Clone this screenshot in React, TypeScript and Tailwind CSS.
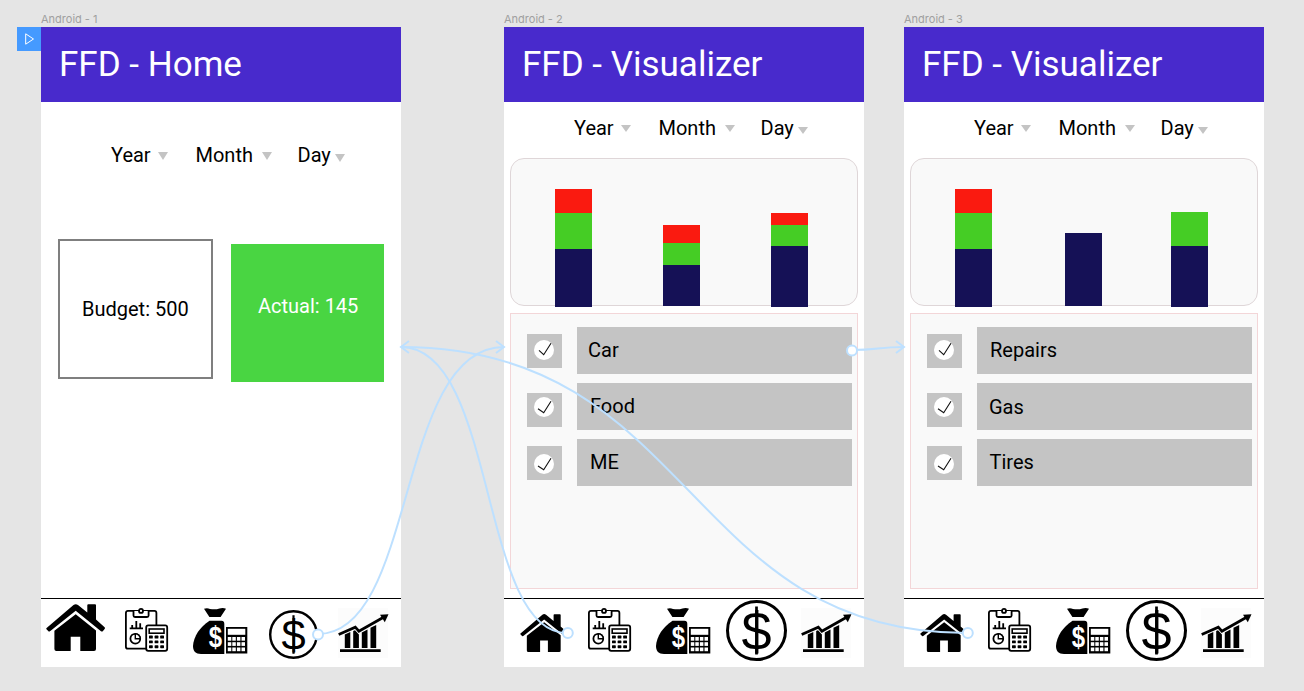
import React from "react";

type Segment = { color: string; height: string };
type Bar = { className: string; segments: Segment[] };
type Row = {
  label: string;
  gap: string;
  textClass: string;
  boxClass: string;
  check: string;
};

const RED = "bg-[#fa1a10]";
const GREEN = "bg-[#45cd25]";
const NAVY = "bg-[#151156]";

function HomeIcon({ className }: { className: string }) {
  return (
    <svg viewBox="0 0 59 47" preserveAspectRatio="none" className={className}>
      <path d="M0.6 24 27.5 1Q29.7-.7 32 1L41.3 8.6V1.2Q41.3.2 42.3.2H49Q50 .2 50 1.2V15.6L58.6 23.2Q59.4 24 58.6 25L57 27Q56 28 55 27.2L29.7 6.8 4 27.2Q3 28 2.2 27L.5 25.2Q0 24.6.6 24Z" />
      <path d="M29.7 10.2 50 26.4V45Q50 47 48 47H34.3V32.8H24.7V47H10.4Q8.4 47 8.4 45V26.8Z" />
    </svg>
  );
}

function ReportIcon() {
  return (
    <svg viewBox="0 0 44 44" className="mt-[9px] h-[44px] w-[44px] shrink-0" fill="none" stroke="#000" strokeWidth="1.8">
      <rect x="0.9" y="2.9" width="30.5" height="37.8" rx="2" />
      <path d="M8.5 3V7.5Q8.5 9 10 9H22Q23.6 9 23.6 7.5V3" fill="#fff" />
      <circle cx="16" cy="2.9" r="2" fill="#fff" />
      <path d="M4.7 20.3H18M7.2 20V17M11.3 20V13M15.2 20V15.3" />
      <circle cx="10.3" cy="30.7" r="4.9" />
      <path d="M10.3 25.8V30.7H15.2A4.9 4.9 0 0 0 10.3 25.8Z" fill="#fff" strokeWidth="1.4" />
      <rect x="21.2" y="17.4" width="21" height="25.4" rx="2" fill="#fff" />
      <rect x="24.2" y="21" width="14.8" height="4.2" strokeWidth="1.6" />
      {[29, 33.8, 38.7].map((y) =>
        [25.9, 31.5, 37.1].map((x) => (
          <rect key={`${x}-${y}`} x={x - 1.9} y={y - 1.4} width="3.8" height="2.9" rx="0.6" fill="#000" stroke="none" />
        ))
      )}
    </svg>
  );
}

function MoneyBagIcon() {
  return (
    <svg viewBox="0 0 55 47" className="ml-[24px] mt-[9px] h-[47px] w-[55px] shrink-0">
      <path d="M11 .8Q14-.4 17 .9 22 2 26.5.5 30-.6 33 .8L27.6 9H16.4Z" />
      <path d="M16.5 12.8H28.4Q31.3 12.8 31.3 16V46H8C2.5 46 0 43 0 38 .5 28.5 7 19 16.5 12.8Z" />
      <g transform="translate(22.3 39.3) scale(.8 1)">
        <text x="0" y="0" textAnchor="middle" fontSize="30" fontWeight="700" fill="#fff" fontFamily="Liberation Sans, sans-serif">
          $
        </text>
      </g>
      <rect x="33" y="19" width="21.3" height="26.500" />
      <rect x="34.8" y="20.8" width="17.5" height="6" fill="#fff" />
      {[29, 34.2, 39.5].map((y) =>
        [34.8, 39.3, 43.9, 48.5].map((x) => <rect key={`${x}-${y}`} x={x} y={y} width="3.5" height="3.7" fill="#fff" />)
      )}
    </svg>
  );
}

function DollarIcon({ className }: { className: string }) {
  return (
    <svg viewBox="0 0 61 61" className={className}>
      <circle cx="30.5" cy="30.5" r="29" fill="none" stroke="#000" strokeWidth="3" />
      <text x="30.5" y="49.5" textAnchor="middle" fontSize="54" fontFamily="Liberation Sans, sans-serif">
        $
      </text>
      <path d="M30.5 6.5V54.5" stroke="#000" strokeWidth="2.7" />
    </svg>
  );
}

function GrowthIcon({ className }: { className: string }) {
  return (
    <svg viewBox="0 -6 51 50" className={className}>
      <rect x="0" y="-6" width="50" height="50" fill="#fcfcfc" />
      <path d="M.7 20.5 17.3 13.2 20.9 17.2 46 3" fill="none" stroke="#000" strokeWidth="2.7" />
      <path d="M50.5.2 42 .8 46.8 8.3Z" />
      <path d="M6.8 20.5 12.3 18V34H6.8ZM15.2 17 17 16.3 20.9 20.5V34H15.2ZM23.8 18.5 29.5 15.5V34H23.8ZM32.5 13.8 38.2 11V34H32.5ZM2 35.3H42.7V38H2Z" />
    </svg>
  );
}

function TabBar({ home = false }: { home?: boolean }) {
  return (
    <nav className="flex h-[69px] items-start border-t border-black">
      <HomeIcon
        className={home ? "ml-[5px] mr-[20px] mt-[5px] h-[47px] w-[59px] shrink-0" : "ml-[16px] mr-[20px] mt-[15px] h-[38px] w-[48px] shrink-0"}
      />
      <ReportIcon />
      <MoneyBagIcon />
      <DollarIcon
        className={home ? "ml-[21px] mt-[11px] h-[49px] w-[49px] shrink-0" : "ml-[15px] mt-[1px] h-[61px] w-[61px] shrink-0"}
      />
      <GrowthIcon className={home ? "ml-[20px] mt-[9px] h-[50px] w-[51px] shrink-0" : "ml-[14px] mt-[9px] h-[50px] w-[51px] shrink-0"} />
    </nav>
  );
}

function Caret({ className }: { className: string }) {
  return (
    <svg viewBox="0 0 10 8" preserveAspectRatio="none" className={className}>
      <path d="M0 0H10L5 8Z" fill="#c4c4c4" />
    </svg>
  );
}

function Filters({ home = false }: { home?: boolean }) {
  const size = home ? "h-[8px] w-[10px]" : "h-[7px] w-[10px]";
  return (
    <div className={`flex h-6 items-start pl-[70px] text-[20px] leading-6 ${home ? "mt-[41px]" : "mt-[14px]"}`}>
      <div className="flex w-[84.5px]">
        <span className="w-[47px]">Year</span>
        <Caret className={`${size} mt-[9px]`} />
      </div>
      <div className="flex w-[102px]">
        <span className="w-[66.5px]">Month</span>
        <Caret className={`${size} mt-[9px]`} />
      </div>
      <div className="flex">
        <span className="w-[37.5px]">Day</span>
        <Caret className={`${size} mt-[11px]`} />
      </div>
    </div>
  );
}

function Frame({ name, title, className, children }: { name: string; title: string; className: string; children: React.ReactNode }) {
  return (
    <section className={`w-[360px] shrink-0 ${className}`}>
      <div className="h-[27px] pt-[12px] font-[Inter,sans-serif] text-[11px] leading-[14px] text-[#a0a0a0]">{name}</div>
      <div className="flex h-[640px] flex-col bg-white">
        <header className="h-[75px] shrink-0 bg-[#482acc] pl-[18px] pt-[17px] text-[35px] leading-[42px] text-white">{title}</header>
        {children}
      </div>
    </section>
  );
}

function BarChart({ bars }: { bars: Bar[] }) {
  return (
    <div className="mx-[6px] mt-[18px] flex h-[148px] shrink-0 items-end rounded-[14px] border border-[#dfd6d8] bg-[#f9f9f9]">
      {bars.map((bar, i) => (
        <div key={i} className={`w-[37px] ${bar.className}`}>
          {bar.segments.map((s, j) => (
            <div key={j} className={`${s.color} ${s.height}`} />
          ))}
        </div>
      ))}
    </div>
  );
}

function CategoryList({ rows }: { rows: Row[] }) {
  return (
    <div className="mx-[6px] mb-[9px] mt-[7px] flex-1 border border-[#f3d6d8] bg-[#f9f9f9] pl-[16px] pt-[13px]">
      {rows.map((row) => (
        <div key={row.label} className={`flex h-[47px] items-start ${row.gap}`}>
          <div className={`w-[35px] bg-[#c4c4c4] pl-[7px] ${row.boxClass}`}>
            <div className="h-[20px] w-[20px] rounded-full bg-white">
              <svg viewBox="0 0 20 20" className="h-[20px] w-[20px]" fill="none" stroke="#111" strokeWidth="1.1">
                <path d={row.check} />
              </svg>
            </div>
          </div>
          <div className={`ml-[15px] h-[47px] w-[275px] bg-[#c4c4c4] text-[20px] leading-6 ${row.textClass}`}>{row.label}</div>
        </div>
      ))}
    </div>
  );
}

const yearBar: Bar = {
  className: "ml-[44px] mb-[-2px]",
  segments: [
    { color: RED, height: "h-[24px]" },
    { color: GREEN, height: "h-[36px]" },
    { color: NAVY, height: "h-[58px]" },
  ],
};

const overviewBars: Bar[] = [
  yearBar,
  {
    className: "ml-[71px] mb-[-1px]",
    segments: [
      { color: RED, height: "h-[18px]" },
      { color: GREEN, height: "h-[22px]" },
      { color: NAVY, height: "h-[41px]" },
    ],
  },
  {
    className: "ml-[71px] mb-[-2px]",
    segments: [
      { color: RED, height: "h-[12px]" },
      { color: GREEN, height: "h-[21px]" },
      { color: NAVY, height: "h-[61px]" },
    ],
  },
];

const carBars: Bar[] = [
  yearBar,
  { className: "ml-[73px] mb-[-1px]", segments: [{ color: NAVY, height: "h-[73px]" }] },
  {
    className: "ml-[69px] mb-[-2px]",
    segments: [
      { color: GREEN, height: "h-[34px]" },
      { color: NAVY, height: "h-[61px]" },
    ],
  },
];

const rowShapes = [
  { gap: "", boxClass: "mt-[7px] h-[34px] pt-[6px]", check: "M5 10.3 9.7 14.7 17 3.3" },
  { gap: "mt-[9px]", boxClass: "mt-[9.6px] h-[34px] pt-[4.4px]", check: "M4 11.7 9.7 15.7 17 4.3" },
  { gap: "mt-[9px]", boxClass: "mt-[7.4px] h-[34px] pt-[7.6px]", check: "M4 12 9.7 15.7 17 4.3" },
];

const overviewRows: Row[] = [
  { label: "Car", textClass: "pl-[11px] pt-[11px]", ...rowShapes[0] },
  { label: "Food", textClass: "pl-[13px] pt-[11px]", ...rowShapes[1] },
  { label: "ME", textClass: "pl-[13px] pt-[11px]", ...rowShapes[2] },
];

const carRows: Row[] = [
  { label: "Repairs", textClass: "pl-[13px] pt-[11px]", ...rowShapes[0] },
  { label: "Gas", textClass: "pl-[12px] pt-[12px]", ...rowShapes[1] },
  { label: "Tires", textClass: "pl-[12.5px] pt-[11px]", ...rowShapes[2] },
];

function Connections() {
  return (
    <svg viewBox="0 0 1304 691" className="pointer-events-none absolute left-0 top-0 h-[691px] w-[1304px]" fill="none" stroke="#bde0ff" strokeWidth="2">
      <path d="M318 634C417 634 396 347 504 347" />
      <path d="M567 633C479 633 497 347 401 347" />
      <path d="M967 633C684 633 695 347 401 347" />
      <path d="M852 350C878 350 878 347 904 347" />
      <path d="M409 341 401 347 409 353M496 341 504 347 496 353M896 341 904 347 896 353" />
      <g fill="#fff">
        <circle cx="318" cy="634.5" r="5" />
        <circle cx="567.8" cy="633" r="5" />
        <circle cx="967.8" cy="633" r="5" />
        <circle cx="852" cy="350.5" r="5" />
      </g>
    </svg>
  );
}

export default function App() {
  return (
    <main className="relative flex h-[691px] w-[1304px] items-start overflow-hidden bg-[#e5e5e5] pl-[17px] font-[Roboto,sans-serif] text-black">
      <div className="mt-[27px] flex h-[24px] w-[24px] shrink-0 items-center justify-center bg-[#459aff]">
        <svg viewBox="0 0 24 24" className="h-[24px] w-[24px]" fill="none" stroke="#fff" strokeWidth="1">
          <path d="M8.7 6.8V17.2L16.5 12Z" />
        </svg>
      </div>
      <Frame name="Android - 1" title="FFD - Home" className="">
        <Filters home />
        <div className="mt-[72px] flex flex-1 items-start pl-[17px]">
          <div className="h-[140px] w-[155px] border-2 border-[#7f7f7f] pl-[22px] pt-[56px] text-[20px] leading-6">Budget: 500</div>
          <div className="ml-[18px] mt-[5px] h-[138px] w-[153px] bg-[#49d542] pl-[27px] pt-[50px] text-[20px] leading-6 text-white">
            Actual: 145
          </div>
        </div>
        <TabBar home />
      </Frame>
      <Frame name="Android - 2" title="FFD - Visualizer" className="ml-[103px]">
        <Filters />
        <BarChart bars={overviewBars} />
        <CategoryList rows={overviewRows} />
        <TabBar />
      </Frame>
      <Frame name="Android - 3" title="FFD - Visualizer" className="ml-[40px]">
        <Filters />
        <BarChart bars={carBars} />
        <CategoryList rows={carRows} />
        <TabBar />
      </Frame>
      <Connections />
    </main>
  );
}
